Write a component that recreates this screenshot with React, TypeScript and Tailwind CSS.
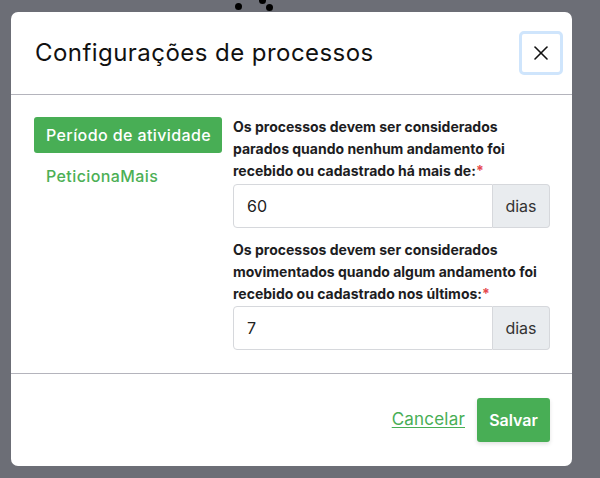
import { X } from "lucide-react";

function DaysField({ value }: { value: string }) {
  return (
    <div className="flex h-[44px] w-full">
      <input
        defaultValue={value}
        className="h-full min-w-0 flex-1 rounded-l-[4px] border border-[#d6d8dc] bg-white pl-[13px] text-[16px] text-[#222] outline-none"
      />
      <span className="flex h-full w-[57px] items-center justify-center rounded-r-[4px] border border-l-0 border-[#d6d8dc] bg-[#e9ecef] text-[16px] text-[#333]">
        dias
      </span>
    </div>
  );
}

function Label({ children }: { children: React.ReactNode }) {
  return (
    <p className="text-[14px] font-bold leading-[22px] text-[#1d1d1f]">
      {children}
      <span className="text-[#e5484d]">*</span>
    </p>
  );
}

export default function App() {
  return (
    <div
      className="relative h-[478px] w-[600px] overflow-hidden bg-[#6c6e76] pl-[11px] pt-[12px]"
      style={{ fontFamily: "Inter, 'Noto Sans', sans-serif" }}
    >
      {/* loading dots behind the modal */}
      <span className="absolute left-[235px] top-[3px] size-[7px] rounded-full bg-black" />
      <span className="absolute left-[259px] top-[-3px] size-[7px] rounded-full bg-black" />
      <span className="absolute left-[266px] top-[4px] size-[7px] rounded-full bg-black" />

      <div className="relative flex h-[454px] w-[561px] flex-col rounded-[7px] bg-white">
        {/* Header */}
        <div className="flex h-[83px] items-center justify-between border-b border-[#b4b4bc] pl-[24px] pr-[9px]">
          <h2 className="text-[24px] font-normal tracking-[0.45px] text-[#111]">
            Configurações de processos
          </h2>
          <button className="flex size-[44px] items-center justify-center rounded-[5px] border-[3px] border-[#cfe5fc] text-[#111]">
            <X size={24} strokeWidth={1.6} />
          </button>
        </div>

        {/* Body */}
        <div className="flex gap-[11px] border-b border-[#b4b4bc] pb-[23px] pl-[23px] pt-[21px]">
          <nav className="flex w-[188px] flex-col">
            <button className="mt-px h-[36px] rounded-[3px] bg-[#48ae55] pl-[12px] text-left text-[16px] font-medium tracking-[0.4px] text-white">
              Período de atividade
            </button>
            <button className="mt-[11px] pl-[12px] text-left text-[16px] font-medium tracking-[0.4px] text-[#4caf55]">
              PeticionaMais
            </button>
          </nav>

          <div className="flex w-[317px] flex-col">
            <Label>
              Os processos devem ser considerados parados quando nenhum andamento foi
              recebido ou cadastrado há mais de:
            </Label>
            <div className="mt-[2px]">
              <DaysField value="60" />
            </div>
            <div className="mt-[11px]">
              <Label>
                Os processos devem ser considerados movimentados quando algum andamento foi
                recebido ou cadastrado nos últimos:
              </Label>
            </div>
            <div className="mt-px">
              <DaysField value="7" />
            </div>
          </div>
        </div>

        {/* Footer */}
        <div className="flex flex-1 items-center justify-end gap-[12px] pr-[22px]">
          <a href="#" className="text-[17px] tracking-[0.2px] text-[#48ae55] underline underline-offset-2">
            Cancelar
          </a>
          <button className="h-[44px] w-[73px] rounded-[3px] bg-[#48ae55] text-[16px] font-semibold text-white shadow-[0_2px_4px_rgba(0,0,0,0.12)]">
            Salvar
          </button>
        </div>
      </div>
    </div>
  );
}
